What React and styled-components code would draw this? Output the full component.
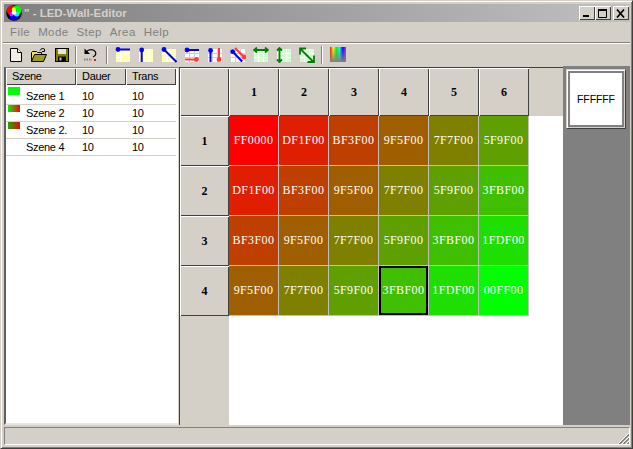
import React from "react"
import styled, { createGlobalStyle } from "styled-components"

const GlobalStyle = createGlobalStyle`
  html, body {
    margin: 0;
    padding: 0;
    background: #d4d0c8;
    font-family: "Liberation Sans", Arial, sans-serif;
  }
`

const Svg = styled.svg`
  width: 16px;
  height: 16px;
  display: block;
`

const scenes = [
  { name: "Szene 1", swatch: "#00ff00", tall: true },
  { name: "Szene 2", swatch: "linear-gradient(90deg, #00f000, #ff0000)" },
  { name: "Szene 2.", swatch: "linear-gradient(90deg, #20a800, #e80800)" },
  { name: "Szene 4", swatch: "transparent" },
]

const hex = (n) => n.toString(16).toUpperCase().padStart(2, "0")

// the step over the wall is 0x20, with the ends clamped to FF / 00
const cellColor = (row, col) => {
  const step = row + col
  if (step === 0) return "FF0000"
  if (step === 8) return "00FF00"
  return hex(255 - step * 32) + hex(step * 32 - 1) + "00"
}

const Tile = ({ cell, line = "#fff", children }) => (
  <Svg viewBox="0 0 16 16">
    <rect x="1" y="2" width="14" height="13" fill={cell} />
    <path d="M1 6.5h14M1 10.5h14M5.5 2v13M10.5 2v13" stroke={line} />
    {children}
  </Svg>
)

const YELLOW = "#ffffb8"
const GREEN = "#d4fcd4"
const BLUE = "#0000ff"
const RED = "#ff3c3c"
const DARK_GREEN = "#008000"
const FACE = "#d4d0c8"

const GreenArrow = ({ d }) => (
  <path d={d} fill="none" stroke={DARK_GREEN} strokeWidth="1.8" />
)

const icons = [
  <Svg viewBox="0 0 16 16" key="new">
    <path d="M2.5 1.5h7l4 4v9h-11z" fill="#f4efe4" stroke="#000" />
    <path d="M9.5 1.5v4h4" fill="#fff" stroke="#000" />
  </Svg>,
  <Svg viewBox="0 0 16 16" key="open">
    <path d="M9 3.5c1-2 3-2.500 4.500-1.500M13.500 2v2.500h-2.500" fill="none" stroke="#000" />
    <path d="M0.500 14.500v-9l1-1h4l1 1h4v2" fill="#f0e060" stroke="#000" />
    <path d="M0.500 14.500l3-7h12l-3 7z" fill="#9c9c20" stroke="#000" />
  </Svg>,
  <Svg viewBox="0 0 16 16" key="save">
    <rect x="1.500" y="1.500" width="13" height="13" fill="#808000" stroke="#000" />
    <rect x="4" y="2" width="8" height="5" fill="#e8e8d0" />
    <rect x="4" y="9.500" width="8" height="5" fill="#000" />
    <rect x="5.500" y="10.500" width="2" height="3" fill="#c8c8a0" />
  </Svg>,
  "sep6",
  <Svg viewBox="0 0 16 16" key="undo">
    <path d="M3 5c3-3.500 8-3 9.500 0 .8 2-.5 4-2.500 5" fill="none" stroke="#000" strokeWidth="1.200" />
    <path d="M1.500 1.500v5.500h5.500z" fill="#000" />
    <path d="M1 12.500h8" stroke="#808080" strokeWidth="2" strokeDasharray="1.500 1" />
    <rect x="11" y="12" width="2" height="2" fill="#d02020" />
  </Svg>,
  "sep9",
  <Tile cell={YELLOW} key="row">
    <circle cx="3" cy="2.500" r="2.400" fill={BLUE} />
    <path d="M3 2.500h12" stroke={BLUE} strokeWidth="2" />
  </Tile>,
  <Tile cell={YELLOW} key="col">
    <circle cx="3.700" cy="3" r="2.400" fill={BLUE} />
    <path d="M3.700 3v12" stroke={BLUE} strokeWidth="2" />
  </Tile>,
  <Tile cell={YELLOW} key="diag">
    <circle cx="3" cy="2.500" r="2.400" fill={BLUE} />
    <path d="M3 2.500l12.500 12.500" stroke={BLUE} strokeWidth="2" />
  </Tile>,
  <Tile cell="#ffffff" line={FACE} key="row2">
    <circle cx="3" cy="3" r="2.400" fill={BLUE} />
    <path d="M3 3h12" stroke={BLUE} strokeWidth="2" />
    <circle cx="12.500" cy="12.500" r="2.400" fill={RED} />
    <path d="M1 12.500h12" stroke={RED} strokeWidth="2" />
  </Tile>,
  <Tile cell="#ffffff" line={FACE} key="col2">
    <circle cx="3.500" cy="3.500" r="2.400" fill={BLUE} />
    <path d="M3.500 4v11" stroke={BLUE} strokeWidth="2" />
    <circle cx="12" cy="12.500" r="2.400" fill={RED} />
    <path d="M12 1v11" stroke={RED} strokeWidth="2" />
  </Tile>,
  <Tile cell="#ffffff" line={FACE} key="diag2">
    <path d="M5 1l9 9" stroke={RED} strokeWidth="2.200" />
    <circle cx="14" cy="10" r="2.400" fill={RED} />
    <circle cx="2.700" cy="4.700" r="2.400" fill={BLUE} />
    <path d="M2.700 4.700l9.500 9.800" stroke={BLUE} strokeWidth="2.200" />
  </Tile>,
  <Tile cell={GREEN} key="h">
    <GreenArrow d="M1 3h14M4 0.500l-3 2.500 3 2.500M12 0.500l3 2.500-3 2.500" />
  </Tile>,
  <Tile cell={GREEN} key="v">
    <GreenArrow d="M3.500 1v14M1 3.500l2.500-2.500 2.500 2.500M1 12.500l2.500 2.500 2.500-2.500" />
  </Tile>,
  <Tile cell={GREEN} key="d">
    <GreenArrow d="M1 1.500l13.500 13.500M1 7.500V1.500h6M15 8.500v6.500H8.500" />
  </Tile>,
  "sep8",
  <Svg viewBox="0 0 16 16" key="rainbow">
    <defs>
      <linearGradient id="hue">
        <stop offset="0" stopColor="#ff0000" />
        <stop offset="0.2" stopColor="#ffff00" />
        <stop offset="0.4" stopColor="#00ff00" />
        <stop offset="0.6" stopColor="#00ffff" />
        <stop offset="0.8" stopColor="#0000ff" />
        <stop offset="1" stopColor="#ff00ff" />
      </linearGradient>
      <linearGradient id="fade" x2="0" y2="1">
        <stop offset="0" stopColor="#808080" stopOpacity="0" />
        <stop offset="1" stopColor="#808080" />
      </linearGradient>
    </defs>
    <rect width="16" height="15" fill="url(#hue)" />
    <rect width="16" height="15" fill="url(#fade)" />
  </Svg>,
]

const App = () => {
  return (
    <>
      <GlobalStyle />
      <Window>
        <TitleBar>
          <Logo viewBox="0 0 16 16">
            <circle cx="8" cy="8" r="7.800" fill="#000" />
            <circle cx="5.500" cy="5.500" r="4.800" fill="#ff0000" />
            <circle cx="10.500" cy="5.500" r="4.800" fill="#00ff00" />
            <circle cx="8" cy="10.500" r="4.800" fill="#0000ff" />
            <circle cx="10.500" cy="9" r="2.500" fill="#00ffff" />
            <circle cx="5.500" cy="9" r="2.200" fill="#ff00ff" />
            <circle cx="8" cy="4.500" r="2" fill="#ffff00" />
            <circle cx="8" cy="7.500" r="2.200" fill="#fff" />
          </Logo>
          <TitleText>" - LED-Wall-Editor</TitleText>
          <CaptionButtons>
            <CaptionButton>
              <svg width="8" height="8" viewBox="0 0 8 8">
                <rect x="0" y="6" width="6" height="2" fill="#000" />
              </svg>
            </CaptionButton>
            <CaptionButton>
              <svg width="10" height="9" viewBox="0 0 10 9">
                <path d="M.5 1.500h8v7h-8z" fill="none" stroke="#000" />
                <rect x="0" y="0" width="9" height="2" fill="#000" />
              </svg>
            </CaptionButton>
            <CaptionButton $close>
              <svg width="10" height="9" viewBox="0 0 10 9">
                <path d="M1 .5l7 8M8 .5l-7 8" stroke="#000" strokeWidth="1.700" />
              </svg>
            </CaptionButton>
          </CaptionButtons>
        </TitleBar>

        <MenuBar>
          {["File", "Mode", "Step", "Area", "Help"].map((m) => (
            <MenuItem key={m}>{m}</MenuItem>
          ))}
        </MenuBar>

        <ToolBar>
          {icons.map((icon, i) =>
            typeof icon === "string" ? (
              <Separator key={i} $width={Number(icon.slice(3))} />
            ) : (
              <ToolButton key={i}>{icon}</ToolButton>
            )
          )}
        </ToolBar>

        <Main>
          <SceneList>
            <ListHeader>
              <HeaderCell $width={70}>Szene</HeaderCell>
              <HeaderCell $width={50}>Dauer</HeaderCell>
              <HeaderCell $width={50}>Trans</HeaderCell>
            </ListHeader>
            {scenes.map((s) => (
              <SceneRow key={s.name}>
                <Swatch $fill={s.swatch} $tall={s.tall} />
                <SceneName>{s.name}</SceneName>
                <SceneValue $width={50}>10</SceneValue>
                <SceneValue $width={43}>10</SceneValue>
              </SceneRow>
            ))}
          </SceneList>

          <WallFrame>
            <WallHeader>
              <Corner />
              {[1, 2, 3, 4, 5, 6].map((n) => (
                <ColumnHead key={n}>{n}</ColumnHead>
              ))}
            </WallHeader>
            <WallBody>
              <RowHeads>
                {[1, 2, 3, 4].map((n) => (
                  <RowHead key={n}>{n}</RowHead>
                ))}
              </RowHeads>
              <Cells>
                {[0, 1, 2, 3].flatMap((row) =>
                  [0, 1, 2, 3, 4, 5].map((col) => {
                    const color = cellColor(row, col)
                    return (
                      <Cell key={`${row}-${col}`} $color={color} $selected={row === 3 && col === 3}>
                        {color}
                      </Cell>
                    )
                  })
                )}
              </Cells>
            </WallBody>
          </WallFrame>

          <SidePanel>
            <ColorButton>
              <ColorFace>FFFFFF</ColorFace>
            </ColorButton>
          </SidePanel>
        </Main>

        <StatusBar>
          <Grip viewBox="0 0 12 12">
            <path d="M12 1L1 12M12 5L5 12M12 9L9 12" stroke="#fff" />
            <path d="M12 2L2 12M12 3L3 12M12 6L6 12M12 7L7 12M12 10L10 12M12 11L11 12" stroke="#808080" />
          </Grip>
        </StatusBar>
      </Window>
    </>
  )
}

export default App

const Window = styled.div`
  box-sizing: border-box;
  width: 633px;
  height: 449px;
  padding: 2px 2px 3px 2px;
  display: flex;
  flex-direction: column;
  background: #d4d0c8;
  border-top: 1px solid #d4d0c8;
  border-left: 1px solid #d4d0c8;
  border-right: 1px solid #404040;
  border-bottom: 1px solid #404040;
  box-shadow: inset 1px 1px 0 #fff, inset -1px -1px 0 #808080;
  overflow: hidden;
`

const TitleBar = styled.div`
  flex: none;
  height: 18px;
  margin-top: 1px;
  margin-left: 1px;
  display: flex;
  align-items: center;
  padding: 0 1px 0 2px;
  background: linear-gradient(90deg, #808080, #c0c0c0);
`

const Logo = styled.svg`
  width: 16px;
  height: 16px;
  flex: none;
`

const TitleText = styled.span`
  margin-left: 2px;
  font: bold 11.5px "Liberation Sans", Arial, sans-serif;
  color: #d4d0c8;
  white-space: nowrap;
`

const CaptionButtons = styled.div`
  margin-left: auto;
  display: flex;
`

const CaptionButton = styled.div`
  box-sizing: border-box;
  width: 16px;
  height: 14px;
  margin-left: ${({ $close }) => ($close ? "2px" : "0")};
  display: flex;
  align-items: center;
  justify-content: center;
  background: #d4d0c8;
  box-shadow: inset 1px 1px 0 #fff, inset -1px -1px 0 #404040;
`

const MenuBar = styled.div`
  flex: none;
  height: 21px;
  box-sizing: border-box;
  display: flex;
  align-items: center;
  padding-left: 3px;
  border-bottom: 1px solid #808080;
`

const MenuItem = styled.span`
  padding: 0 4px;
  font-size: 11.5px;
  letter-spacing: 0.4px;
  color: #808080;
`

const ToolBar = styled.div`
  flex: none;
  height: 23px;
  box-sizing: border-box;
  display: flex;
  align-items: center;
  padding-left: 1px;
  border-top: 1px solid #fff;
`

const ToolButton = styled.div`
  width: 23px;
  height: 22px;
  flex: none;
  display: flex;
  align-items: center;
  justify-content: center;
`

const Separator = styled.div`
  width: ${({ $width }) => $width}px;
  height: 18px;
  flex: none;
  display: flex;
  justify-content: center;

  &::before {
    content: "";
    width: 1px;
    height: 100%;
    background: #808080;
    border-right: 1px solid #fff;
  }
`

const Main = styled.div`
  flex: 1;
  min-height: 0;
  display: flex;
  margin-left: 1px;
`

const SceneList = styled.div`
  box-sizing: border-box;
  width: 175px;
  margin: 1px 0 2px 0;
  background: #fff;
  border-top: 1px solid #808080;
  border-left: 2px solid #606060;
  border-right: 1px solid #d4d0c8;
  border-bottom: 2px solid #e8e6e0;
`

const ListHeader = styled.div`
  display: flex;
  height: 17px;
  margin-bottom: 3px;
`

const HeaderCell = styled.div`
  box-sizing: border-box;
  width: ${({ $width }) => $width}px;
  height: 17px;
  padding-left: 6px;
  background: #d4d0c8;
  font-size: 11px;
  letter-spacing: -0.3px;
  line-height: 16px;
  color: #000;
  box-shadow: inset 1px 1px 0 #fff, inset -1px -1px 0 #404040;
`

const SceneRow = styled.div`
  box-sizing: border-box;
  display: flex;
  height: 17px;
  margin-right: 2px;
  padding-left: 2px;
  border-bottom: 1px solid #d4d0c8;
  font-size: 11px;
  letter-spacing: -0.3px;
  line-height: 16px;
  color: #000;
`

const Swatch = styled.div`
  width: 12px;
  height: ${({ $tall }) => ($tall ? "8px" : "7px")};
  margin-top: ${({ $tall }) => ($tall ? "-1px" : "0")};
  flex: none;
  background: ${({ $fill }) => $fill};
`

const SceneName = styled.span`
  width: 56px;
  margin-left: 6px;
  flex: none;
`

const SceneValue = styled.span`
  width: ${({ $width }) => $width}px;
  flex: none;
`

const WallFrame = styled.div`
  box-sizing: border-box;
  width: 384px;
  flex: none;
  margin: 1px 0 2px 0;
  display: flex;
  flex-direction: column;
  background: #fff;
  border-top: 1px solid #404040;
  border-left: 1px solid #404040;
`

const WallHeader = styled.div`
  flex: none;
  display: flex;
  height: 48px;
  background: #d4d0c8;
`

const HeadCell = styled.div`
  box-sizing: border-box;
  flex: none;
  display: flex;
  align-items: center;
  justify-content: center;
  background: #d4d0c8;
  font: bold 12px "Liberation Serif", "Times New Roman", serif;
  color: #000;
  box-shadow: inset 1px 1px 0 #fff, inset -1px -1px 0 #404040;
`

const Corner = styled(HeadCell)`
  width: 49px;
  height: 48px;
`

const ColumnHead = styled(HeadCell)`
  width: 50px;
  height: 48px;
`

const RowHead = styled(HeadCell)`
  width: 49px;
  height: 50px;
`

const WallBody = styled.div`
  flex: 1;
  display: flex;
`

const RowHeads = styled.div`
  width: 49px;
  flex: none;
  background: #d4d0c8;
`

const Cells = styled.div`
  display: grid;
  grid-template-columns: repeat(6, 50px);
  grid-auto-rows: 50px;
  align-content: start;
`

const Cell = styled.div`
  box-sizing: border-box;
  display: flex;
  align-items: center;
  justify-content: center;
  background: #${({ $color }) => $color};
  border-right: 1px solid #c0c0c0;
  border-bottom: 1px solid #c0c0c0;
  box-shadow: ${({ $selected }) => ($selected ? "inset 0 0 0 2px #000" : "none")};
  font: 12px "Liberation Serif", "Times New Roman", serif;
  letter-spacing: 0.4px;
  color: #fff;
`

const SidePanel = styled.div`
  flex: 1;
  background: #808080;
  padding: 3px 3px 0 3px;
  margin-bottom: 2px;
`

const ColorButton = styled.div`
  box-sizing: border-box;
  width: 60px;
  height: 60px;
  padding: 3px;
  background: #808080;
  border-top: 1px solid #d4d0c8;
  border-left: 1px solid #d4d0c8;
  border-right: 1px solid #404040;
  border-bottom: 1px solid #404040;
  box-shadow: inset 1px 1px 0 #fff, inset -1px -1px 0 #d4d0c8;
`

const ColorFace = styled.div`
  height: 100%;
  display: flex;
  align-items: center;
  justify-content: center;
  background: #fff;
  font-size: 10.5px;
  letter-spacing: -0.1px;
  color: #000;
`

const StatusBar = styled.div`
  box-sizing: border-box;
  flex: none;
  height: 18px;
  margin: 0 0 0 1px;
  display: flex;
  justify-content: flex-end;
  align-items: flex-end;
  border-top: 1px solid #808080;
  border-left: 1px solid #808080;
  border-right: 1px solid #fff;
  border-bottom: 1px solid #fff;
`

const Grip = styled.svg`
  width: 12px;
  height: 12px;
  display: block;
`
